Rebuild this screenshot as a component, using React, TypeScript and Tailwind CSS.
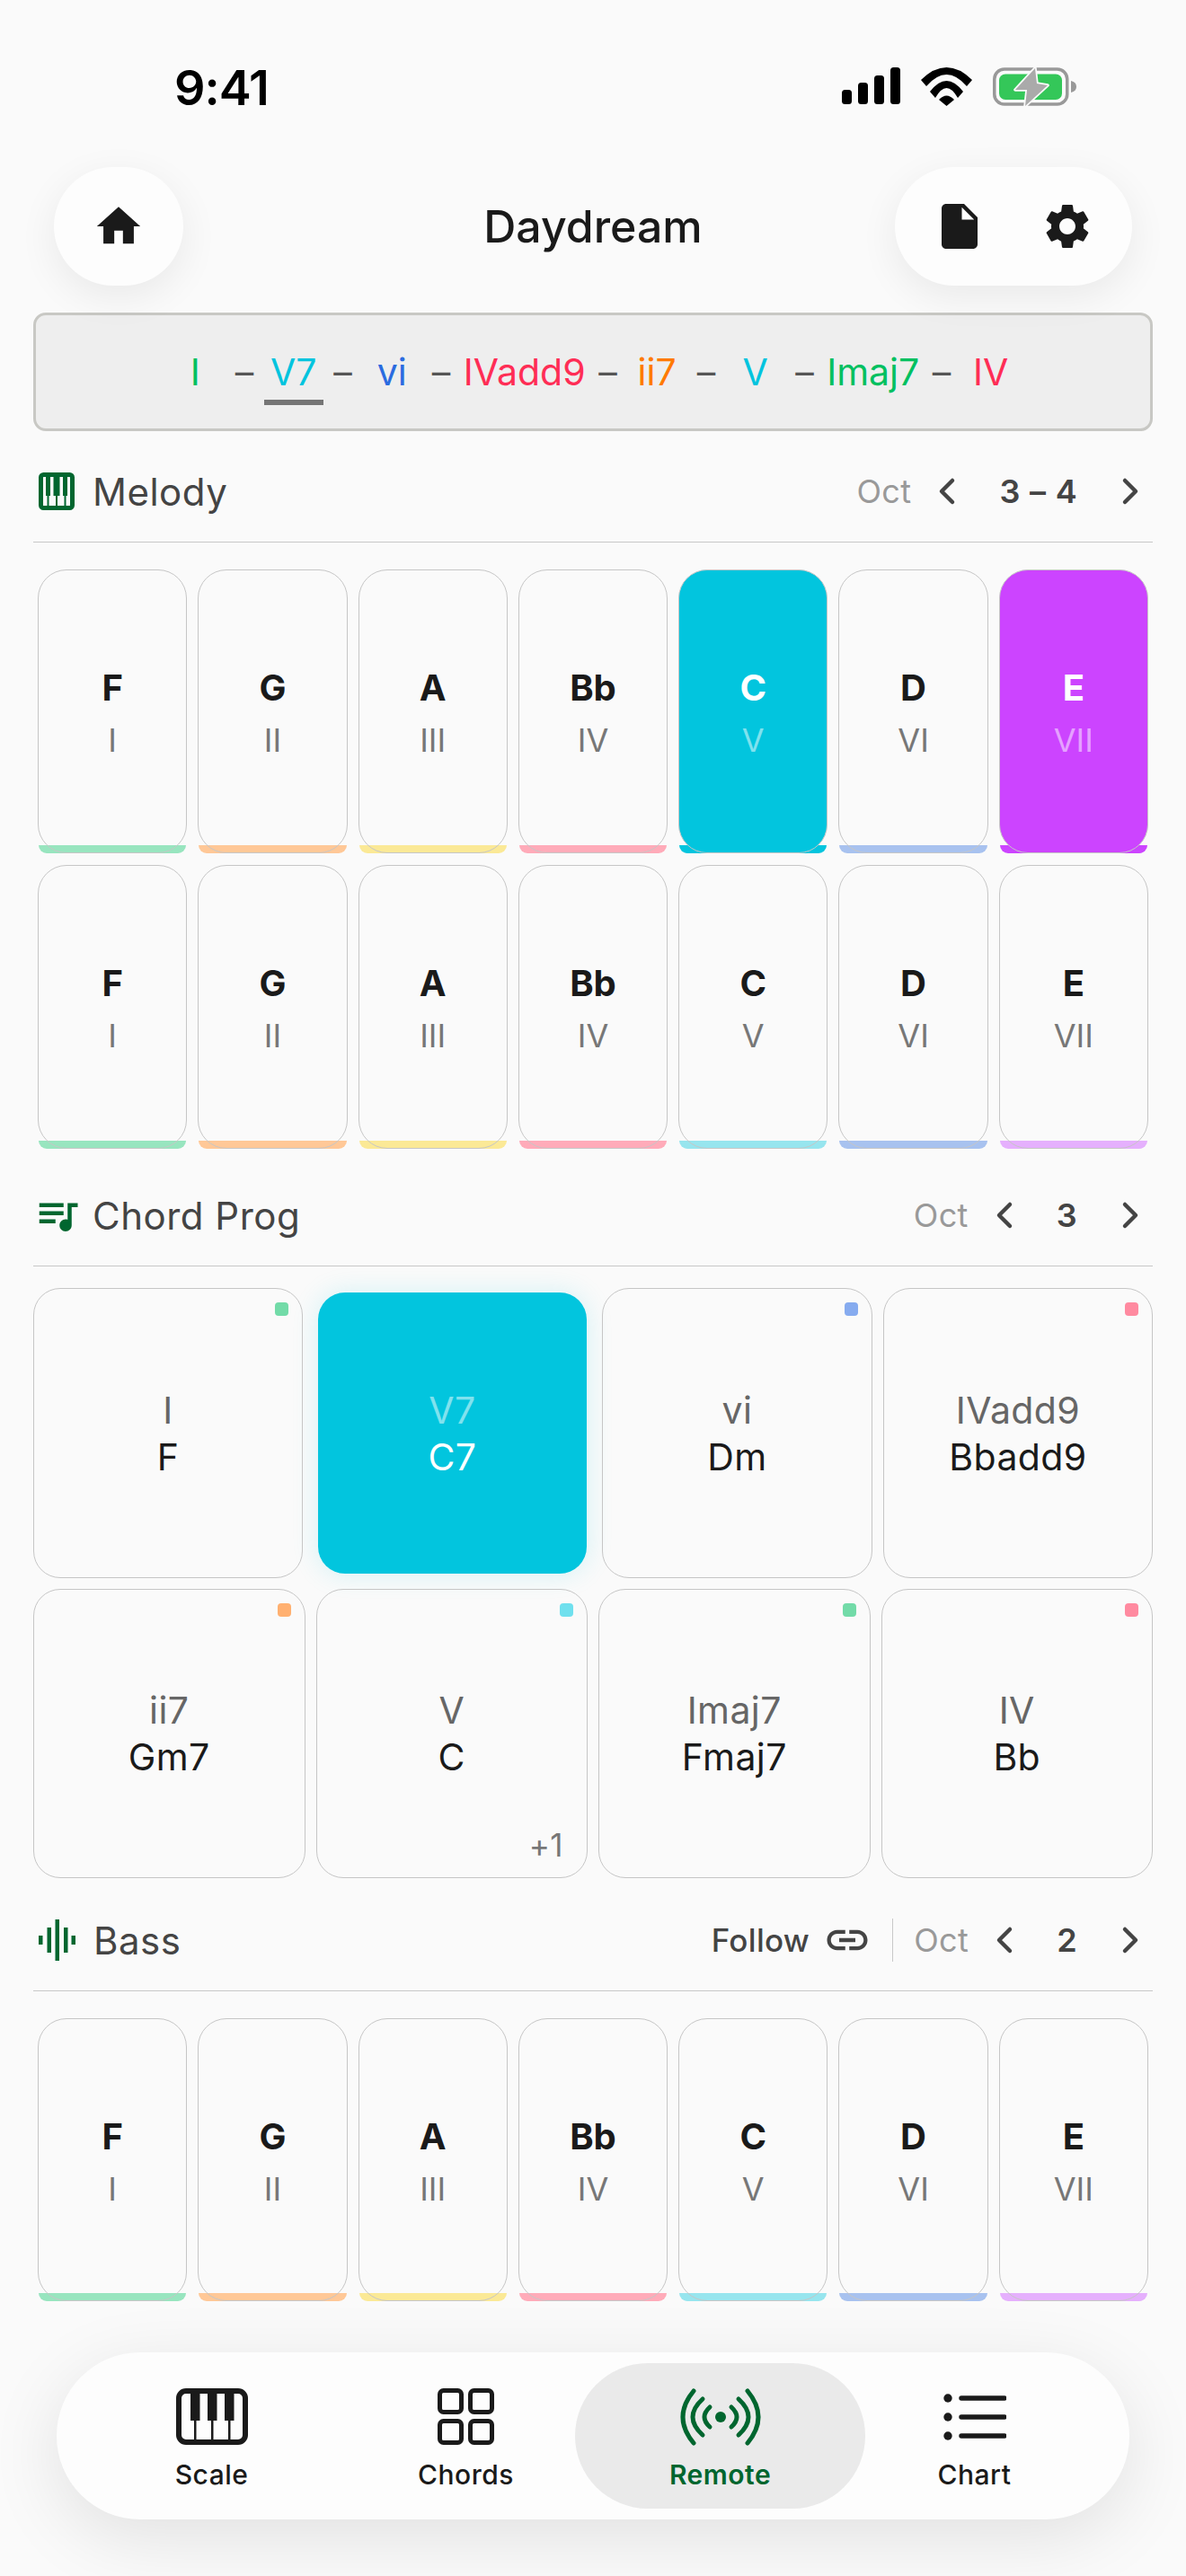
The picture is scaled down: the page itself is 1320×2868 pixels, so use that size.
import React from 'react';
import { ChevronLeft, ChevronRight } from 'lucide-react';
import { MdHome, MdInsertDriveFile, MdLink, MdQueueMusic, MdSettings } from 'react-icons/md';

const notes = [
  { name: 'F', degree: 'I', strip: 'bg-[#98e5bf]' },
  { name: 'G', degree: 'II', strip: 'bg-[#ffc897]' },
  { name: 'A', degree: 'III', strip: 'bg-[#fbe996]' },
  { name: 'Bb', degree: 'IV', strip: 'bg-[#ffabb9]' },
  { name: 'C', degree: 'V', strip: 'bg-[#97e5ee]' },
  { name: 'D', degree: 'VI', strip: 'bg-[#a8c2ef]' },
  { name: 'E', degree: 'VII', strip: 'bg-[#e5b0fd]' },
];

const progression = [
  { label: 'I', color: 'text-[#00c060]' },
  { label: 'V7', color: 'text-[#00c4de]', current: true },
  { label: 'vi', color: 'text-[#2a6be0]' },
  { label: 'IVadd9', color: 'text-[#ff2d55]' },
  { label: 'ii7', color: 'text-[#ff7a00]' },
  { label: 'V', color: 'text-[#00c4de]' },
  { label: 'Imaj7', color: 'text-[#00c060]' },
  { label: 'IV', color: 'text-[#ff2d55]' },
];

function Signal() {
  return (
    <svg width="65" height="41" viewBox="0 0 65 41" fill="#000">
      <rect x="0" y="25" width="11" height="16" rx="3.5" />
      <rect x="18" y="17" width="11" height="24" rx="3.5" />
      <rect x="36" y="9" width="11" height="32" rx="3.5" />
      <rect x="54" y="0" width="11" height="41" rx="3.5" />
    </svg>
  );
}

function Wifi() {
  return (
    <svg width="57" height="43" viewBox="0 0 57 43" fill="#000">
      <path d="M0 14 Q28.5 -14 57 14 L51 21 Q28.5 -5 6 21 Z" />
      <path d="M10 27 Q28.5 3 47 27 L41 34 Q28.5 12 16 34 Z" />
      <path d="M20 36 Q28.5 27 37 36 L28.5 43 Z" />
    </svg>
  );
}

function Battery() {
  return (
    <svg width="93" height="44" viewBox="0 0 93 44">
      <rect x="1.75" y="2" width="81" height="39" rx="11" fill="none" stroke="#999" strokeWidth="3.5" />
      <rect x="7" y="7.5" width="70" height="28.5" rx="7" fill="#34c759" />
      <path d="M87 15 C91 16 93 18 93 21.5 C93 25 91 27 87 28 Z" fill="#999" />
      <path d="M47 1 L25 25 L38 25 L36 43 L61 20 L49 18 Z" fill="#aaa" stroke="#fafafa" strokeWidth="3.5" strokeLinejoin="round" paintOrder="stroke" />
    </svg>
  );
}

function SmallPiano() {
  return (
    <svg width="40" height="42" viewBox="0 0 40 42">
      <rect x="2.5" y="2.5" width="35" height="37" rx="3" fill="#fafafa" stroke="#00662f" strokeWidth="5" />
      <rect x="8" y="2" width="5" height="24" fill="#00662f" />
      <rect x="16.5" y="2" width="7" height="24" fill="#00662f" />
      <rect x="27" y="2" width="5" height="24" fill="#00662f" />
      <rect x="9.5" y="26" width="2" height="14" fill="#00662f" />
      <rect x="19" y="26" width="2" height="14" fill="#00662f" />
      <rect x="28.5" y="26" width="2" height="14" fill="#00662f" />
    </svg>
  );
}

function Waveform() {
  return (
    <svg width="41" height="46" viewBox="0 0 41 46" fill="#00662f">
      <rect x="0" y="18" width="4.5" height="10" />
      <rect x="9.5" y="9" width="4.5" height="28" />
      <rect x="18.5" y="0" width="4.5" height="46" />
      <rect x="28" y="9" width="4.5" height="28" />
      <rect x="36.5" y="18" width="4.5" height="10" />
    </svg>
  );
}

function ScaleIcon() {
  return (
    <svg width="80" height="63" viewBox="0 0 80 63" fill="#1a1a1a">
      <rect x="3" y="3" width="74" height="57" rx="8" fill="none" stroke="#1a1a1a" strokeWidth="6" />
      <rect x="16" y="3" width="10.5" height="33" />
      <rect x="35" y="3" width="10.5" height="33" />
      <rect x="54" y="3" width="10.5" height="33" />
      <rect x="20" y="36" width="2.5" height="24" />
      <rect x="39" y="36" width="2.5" height="24" />
      <rect x="58" y="36" width="2.5" height="24" />
    </svg>
  );
}

function ChordsIcon() {
  return (
    <svg width="63" height="63" viewBox="0 0 63 63" fill="none" stroke="#1a1a1a" strokeWidth="5">
      <rect x="2.5" y="2.5" width="24" height="24" rx="4" />
      <rect x="36.5" y="2.5" width="24" height="24" rx="4" />
      <rect x="2.5" y="36.5" width="24" height="24" rx="4" />
      <rect x="36.5" y="36.5" width="24" height="24" rx="4" />
    </svg>
  );
}

function RemoteIcon() {
  return (
    <svg width="90" height="64" viewBox="-45 -32 90 64" fill="none" stroke="#00662f" strokeWidth="5" strokeLinecap="round">
      <circle cx="0" cy="0" r="6" fill="#00662f" stroke="none" />
      <path d="M-12 -11 Q-24 0 -12 11" />
      <path d="M-20 -20 Q-42 0 -20 20" />
      <path d="M-30 -29 Q-54 0 -30 29" />
      <path d="M12 -11 Q24 0 12 11" />
      <path d="M20 -20 Q42 0 20 20" />
      <path d="M30 -29 Q54 0 30 29" />
    </svg>
  );
}

function ChartIcon() {
  return (
    <svg width="70" height="52" viewBox="0 0 70 52" fill="#1a1a1a" stroke="#1a1a1a" strokeLinecap="round">
      <circle cx="5" cy="5" r="4.7" stroke="none" />
      <circle cx="5" cy="26" r="4.7" stroke="none" />
      <circle cx="5" cy="47" r="4.7" stroke="none" />
      <path d="M20 5 H68 M20 26 H68 M20 47 H68" strokeWidth="5.5" fill="none" />
    </svg>
  );
}

function NoteRows({ rows, active = {}, height = 'h-[316px]' }: { rows: number; active?: Record<string, string>; height?: string }) {
  const cells = Array.from({ length: rows }).flatMap((_, row) =>
    notes.map((n) => ({ ...n, row, fill: row === 0 ? active[n.name] : undefined })),
  );
  return (
    <div className="grid grid-cols-7 gap-x-[12px] gap-y-[13px] px-[5px]">
      {cells.map((n) => (
        <div key={`${n.row}-${n.name}`} className={`relative ${height}`}>
          <div
            className={`absolute bottom-0 inset-x-[1px] h-[9px] rounded-b-[12px] ${
              n.fill === 'cyan' ? 'bg-[#02c5de]' : n.fill === 'purple' ? 'bg-[#cc44ff]' : n.strip
            }`}
          />
          <div
            className={`relative flex h-full flex-col items-center justify-center gap-[14px] rounded-[32px] border border-[#c6c6c6] pt-[6px] ${
              n.fill === 'cyan' ? 'bg-[#02c5de]' : n.fill === 'purple' ? 'bg-[#cc44ff]' : ''
            }`}
          >
            <span className={`text-[40px] font-bold leading-[44px] ${n.fill ? 'text-white' : 'text-[#1a1a1a]'}`}>{n.name}</span>
            <span className={`text-[36px] leading-[44px] ${n.fill ? 'text-white/50' : 'text-[#777]'}`}>{n.degree}</span>
          </div>
        </div>
      ))}
    </div>
  );
}

function Octave({ value }: { value: string }) {
  return (
    <div className="flex items-center pr-[1.5px]">
      <span className="mr-[16px] text-[36px] tracking-[0.4px] text-[#999]">Oct</span>
      <ChevronLeft size={48} strokeWidth={2.25} className="text-[#444]" />
      <span className="px-[34px] text-[36px] font-semibold tracking-[0.8px] text-[#444]">{value}</span>
      <ChevronRight size={48} strokeWidth={2.25} className="text-[#444]" />
    </div>
  );
}

function SectionHeader({ icon, title, children, iconGap }: { icon: React.ReactNode; title: string; children: React.ReactNode; iconGap: string }) {
  return (
    <div className="flex h-[113px] items-center justify-between border-b border-[#c8c8c8]">
      <div className={`flex items-center ${iconGap}`}>
        {icon}
        <span className="text-[42px] tracking-[0.5px] text-[#444]">{title}</span>
      </div>
      {children}
    </div>
  );
}

function ChordCard({ top, bottom, dot, extra }: { top: string; bottom: string; dot: string; extra?: string }) {
  return (
    <div className="relative flex h-full flex-col items-center justify-center rounded-[30px] border border-[#c6c6c6] text-[41px] leading-[52px] tracking-[0.4px]">
      <span className={`absolute right-[15px] top-[15px] size-[15px] rounded-[4px] ${dot}`} />
      <span className="text-[#666]">{top}</span>
      <span className="text-[#1a1a1a]">{bottom}</span>
      {extra && <span className="absolute bottom-[14px] right-[26px] text-[35px] leading-[44px] text-[#777]">{extra}</span>}
    </div>
  );
}

function NavItem({ icon, label }: { icon: React.ReactNode; label: string }) {
  return (
    <div className="flex flex-col items-center justify-center gap-[13px] pt-[10px]">
      <span className="flex h-[63px] items-center">{icon}</span>
      <span className="text-[30px] font-medium leading-[40px] tracking-[0.5px] text-[#1a1a1a]">{label}</span>
    </div>
  );
}

export default function App() {
  return (
    <div className="relative flex h-[2868px] w-[1320px] flex-col overflow-hidden bg-[#fafafa] font-['Inter',sans-serif]">
      {/* status bar */}
      <div className="flex h-[186px] items-start justify-between pl-[194px] pr-[122px] pt-[62px]">
        <span className="text-[54px] font-semibold leading-[72px] tracking-[-1px] text-black">9:41</span>
        <div className="flex items-start gap-[23px] pt-[13px]">
          <Signal />
          <Wifi />
          <Battery />
        </div>
      </div>

      {/* header */}
      <div className="relative z-10 grid h-[132px] grid-cols-[1fr_auto_1fr] items-center px-[60px]">
        <div className="flex h-[132px] w-[144px] items-center justify-center rounded-full bg-[#fdfdfd] shadow-[0_12px_44px_rgba(0,0,0,0.07)]">
          <MdHome size={58} className="text-[#1a1a1a]" />
        </div>
        <span className="text-[50px] font-medium text-[#1a1a1a]">Daydream</span>
        <div className="flex h-[132px] w-[264px] items-center justify-center gap-[60px] justify-self-end rounded-full bg-[#fdfdfd] shadow-[0_12px_44px_rgba(0,0,0,0.07)]">
          <MdInsertDriveFile size={60} className="text-[#1a1a1a]" />
          <MdSettings size={60} className="text-[#1a1a1a]" />
        </div>
      </div>

      <div className="flex flex-col px-[37px]">
        {/* progression strip */}
        <div className="mt-[30px] flex h-[132px] items-center justify-center gap-[11.5px] rounded-[14px] border-[3.5px] border-[#c8c8c4] bg-[#eeeeee] text-[41px] leading-[52px]">
          {progression.map((p, i) => (
            <React.Fragment key={p.label + i}>
              {i > 0 && <span className="text-[#555]">–</span>}
              <span className={`relative min-w-[66px] px-[3px] text-center ${p.color}`}>
                {p.label}
                {p.current && <span className="absolute -bottom-[11px] inset-x-0 h-[6px] bg-[#757575]" />}
              </span>
            </React.Fragment>
          ))}
        </div>

        {/* melody */}
        <div className="mt-[11px]">
          <SectionHeader icon={<SmallPiano />} title="Melody" iconGap="gap-[20px] pl-[6px]">
            <Octave value="3 – 4" />
          </SectionHeader>
        </div>
        <div className="mt-[30px]">
          <NoteRows rows={2} active={{ C: 'cyan', E: 'purple' }} />
        </div>

        {/* chord prog */}
        <div className="mt-[18px]">
          <SectionHeader icon={<MdQueueMusic size={54} className="text-[#00662f]" />} title="Chord Prog" iconGap="gap-[12px]">
            <Octave value="3" />
          </SectionHeader>
        </div>
        <div className="mt-[24px] grid h-[323px] grid-cols-[300px_309px_301px_300px] gap-x-[12px]">
          <ChordCard top="I" bottom="F" dot="bg-[#72dba8]" />
          <div className="m-[5px] flex flex-col items-center justify-center rounded-[30px] bg-[#02c5de] text-[41px] leading-[52px] tracking-[0.4px] shadow-[0_0_30px_rgba(2,197,222,0.16)]">
            <span className="text-white/50">V7</span>
            <span className="text-white">C7</span>
          </div>
          <ChordCard top="vi" bottom="Dm" dot="bg-[#86abef]" />
          <ChordCard top="IVadd9" bottom="Bbadd9" dot="bg-[#ff8aa0]" />
        </div>
        <div className="mt-[12px] grid h-[322px] grid-cols-4 gap-x-[12px]">
          <ChordCard top="ii7" bottom="Gm7" dot="bg-[#ffb070]" />
          <ChordCard top="V" bottom="C" dot="bg-[#6fe0ee]" extra="+1" />
          <ChordCard top="Imaj7" bottom="Fmaj7" dot="bg-[#72dba8]" />
          <ChordCard top="IV" bottom="Bb" dot="bg-[#ff8aa0]" />
        </div>

        {/* bass */}
        <div className="mt-[13px]">
          <SectionHeader icon={<Waveform />} title="Bass" iconGap="gap-[20px] pl-[6px]">
            <div className="flex items-center">
              <span className="mr-[15px] text-[35px] font-medium tracking-[0.3px] text-[#444]">Follow</span>
              <MdLink size={54} className="text-[#444]" />
              <span className="mx-[23px] h-[48px] w-px bg-[#c8c8c8]" />
              <Octave value="2" />
            </div>
          </SectionHeader>
        </div>
        <div className="mt-[30px]">
          <NoteRows rows={1} height="h-[315px]" />
        </div>
      </div>

      {/* bottom nav */}
      <div className="mx-[63px] mt-[57px] grid h-[186px] grid-cols-4 rounded-full bg-[#fdfdfd] px-[31px] shadow-[0_20px_80px_rgba(0,0,0,0.1)]">
        <NavItem icon={<ScaleIcon />} label="Scale" />
        <NavItem icon={<ChordsIcon />} label="Chords" />
        <div className="relative flex flex-col items-center justify-center gap-[13px] pt-[10px]">
          <span className="absolute -inset-x-[20px] inset-y-[12px] rounded-full bg-[#eaeaea]" />
          <span className="relative flex h-[63px] items-center">
            <RemoteIcon />
          </span>
          <span className="relative text-[30px] font-semibold leading-[40px] tracking-[0.5px] text-[#00662f]">Remote</span>
        </div>
        <NavItem icon={<ChartIcon />} label="Chart" />
      </div>
    </div>
  );
}
